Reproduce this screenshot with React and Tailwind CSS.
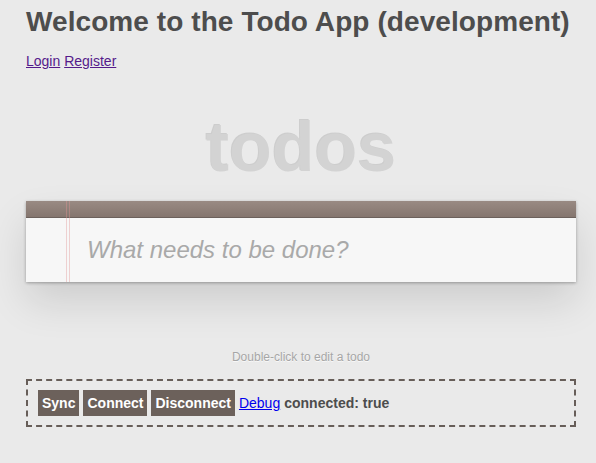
import React from "react";

const App = () => {
  return (
    <div className="min-h-screen bg-[#eaeaea] font-['Liberation_Sans',Arial,sans-serif] text-[14px] leading-[20px] text-[#4d4d4d]">
      <div className="ml-[26px] w-[550px]">
        <h1 className="pt-[2px] text-[28px] font-bold leading-[39px] tracking-[0.08px] whitespace-nowrap">
          Welcome to the Todo App (development)
        </h1>
        <div className="mt-[10px]">
          <a href="#" className="text-[#551a8b] underline">Login</a>{" "}
          <a href="#" className="text-[#551a8b] underline">Register</a>
        </div>

        <h1 className="mt-[41px] text-center text-[70px] font-bold leading-[70px] text-[#d3d3d3] [text-shadow:-1px_-1px_rgba(0,0,0,0.12)]">
          todos
        </h1>

        {/* todo box */}
        <section className="relative mt-[19px] bg-[#f7f7f7] shadow-[0_1px_3px_0_rgba(0,0,0,0.3),0_20px_40px_0_rgba(0,0,0,0.12)]">
          <div className="h-[17px] border-b border-[#6c615c] bg-gradient-to-b from-[#998a83] to-[#85766f]" />
          <input
            type="text"
            placeholder="What needs to be done?"
            className="block h-[64px] w-full bg-transparent pl-[61px] text-[24px] italic text-[#4d4d4d] outline-none placeholder:text-[#a9a9a9]"
          />
          <div className="pointer-events-none absolute top-0 bottom-0 left-[40px] w-[4px] border-x border-[rgba(225,150,150,0.4)]" />
        </section>

        <p className="mt-[67px] text-center text-[12px] leading-[17px] text-[#a6a6a6] [text-shadow:0_1px_0_rgba(255,255,255,0.7)]">
          Double-click to edit a todo
        </p>

        <div className="mt-[13px] flex items-center gap-[4px] border-2 border-dashed border-[#675e59] px-[10px] py-[9px]">
          <button className="bg-[#6c615b] px-[4px] py-[3px] font-bold text-white">Sync</button>
          <button className="bg-[#6c615b] px-[4px] py-[3px] font-bold text-white">Connect</button>
          <button className="bg-[#6c615b] px-[4px] py-[3px] font-bold text-white">Disconnect</button>
          <a href="#" className="text-[#0000ee] underline">Debug</a>
          <span className="font-bold">connected: true</span>
        </div>
      </div>
    </div>
  );
};

export default App;
